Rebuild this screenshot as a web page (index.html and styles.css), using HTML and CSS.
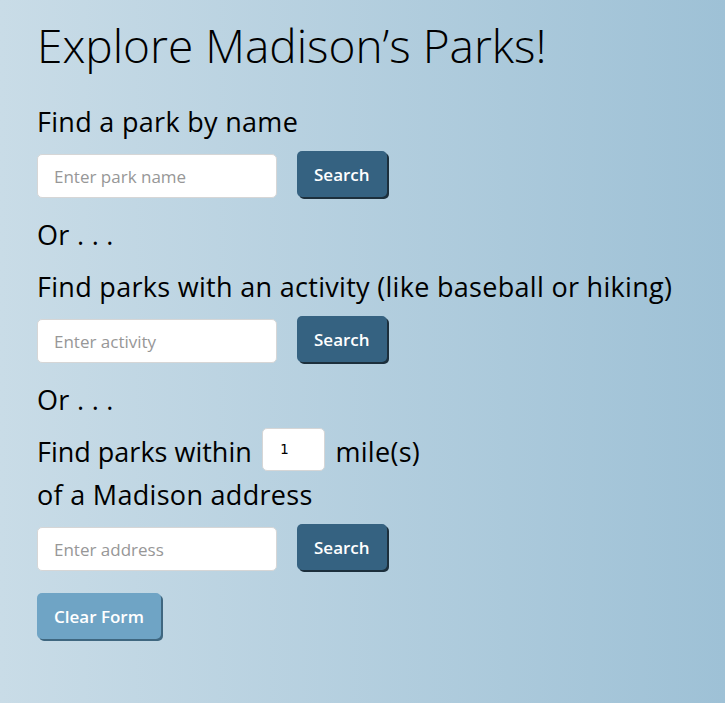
FILE: index.html
```html
<!DOCTYPE html>
<html>
<head>
<meta charset="utf-8">
<link rel="stylesheet" href="styles.css">
</head>
<body>
<main class="page">
  <h1 class="title">Explore Madison’s Parks!</h1>
  <form class="finder">
    <p class="label">Find a park by name</p>
    <div class="row">
      <input class="field" type="text" placeholder="Enter park name">
      <button class="btn" type="button">Search</button>
    </div>
    <p class="label or">Or . . .</p>
    <p class="label">Find parks with an activity (like baseball or hiking)</p>
    <div class="row">
      <input class="field" type="text" placeholder="Enter activity">
      <button class="btn" type="button">Search</button>
    </div>
    <p class="label or">Or . . .</p>
    <p class="label"><span class="tight">Find parks within</span> <input class="miles" type="number" value="1"> mile(s)<br>of a Madison address</p>
    <div class="row">
      <input class="field" type="text" placeholder="Enter address">
      <button class="btn" type="button">Search</button>
    </div>
    <div class="actions">
      <button class="btn btn-clear" type="button">Clear Form</button>
    </div>
  </form>
</main>
</body>
</html>
```
FILE: styles.css
```css
html, body {
  margin: 0;
  height: 100%;
}
body {
  background: linear-gradient(to right, #c9dce7 0%, #9ec1d6 100%);
  color: #000;
  font-family: "Open Sans", sans-serif;
}
.page {
  padding: 17px 37px 0 37px;
}
.title {
  margin: 0;
  font-family: "Open Sans", sans-serif;
  font-weight: 300;
  font-size: 46px;
  line-height: 56px;
}
.finder {
  margin-top: 27px;
}
.label {
  margin: 0;
  font-size: 27px;
  letter-spacing: 0.3px;
  font-weight: 400;
  line-height: 43px;
}
.tight {
  letter-spacing: 0;
}
.or {
  margin-bottom: 9px;
}
.row {
  display: flex;
  align-items: flex-start;
  gap: 20px;
  margin: 11px 0 15px;
}
.field {
  box-sizing: border-box;
  width: 240px;
  height: 44px;
  border: 1px solid #d6d6d6;
  border-radius: 5px;
  background: #fff;
  padding: 0 16px;
  font-family: "Open Sans", sans-serif;
  font-size: 17px;
}
.field::placeholder {
  color: #979797;
}
.btn {
  box-sizing: border-box;
  height: 46px;
  margin-top: -3px;
  padding: 0 17px;
  border: none;
  border-radius: 5px;
  background: #356281;
  color: #fff;
  font-family: "Open Sans", sans-serif;
  font-weight: 600;
  font-size: 17px;
  box-shadow: 2px 2px 0 #1c2f3c;
}
.actions {
  margin-top: 22px;
}
.btn-clear {
  margin-top: 0;
  background: #6fa4c5;
  box-shadow: 2px 2px 0 #3f6780;
}
.miles {
  box-sizing: border-box;
  width: 63px;
  height: 43px;
  margin: -10px 3px -10px 3px;
  border: 1px solid #d6d6d6;
  border-radius: 5px;
  background: #fff;
  padding: 0 17px;
  font-family: "DejaVu Sans Mono", monospace;
  font-size: 14px;
  letter-spacing: 0;
  vertical-align: 8px;
  -moz-appearance: textfield;
}
.miles::-webkit-inner-spin-button,
.miles::-webkit-outer-spin-button {
  -webkit-appearance: none;
  margin: 0;
}
```
